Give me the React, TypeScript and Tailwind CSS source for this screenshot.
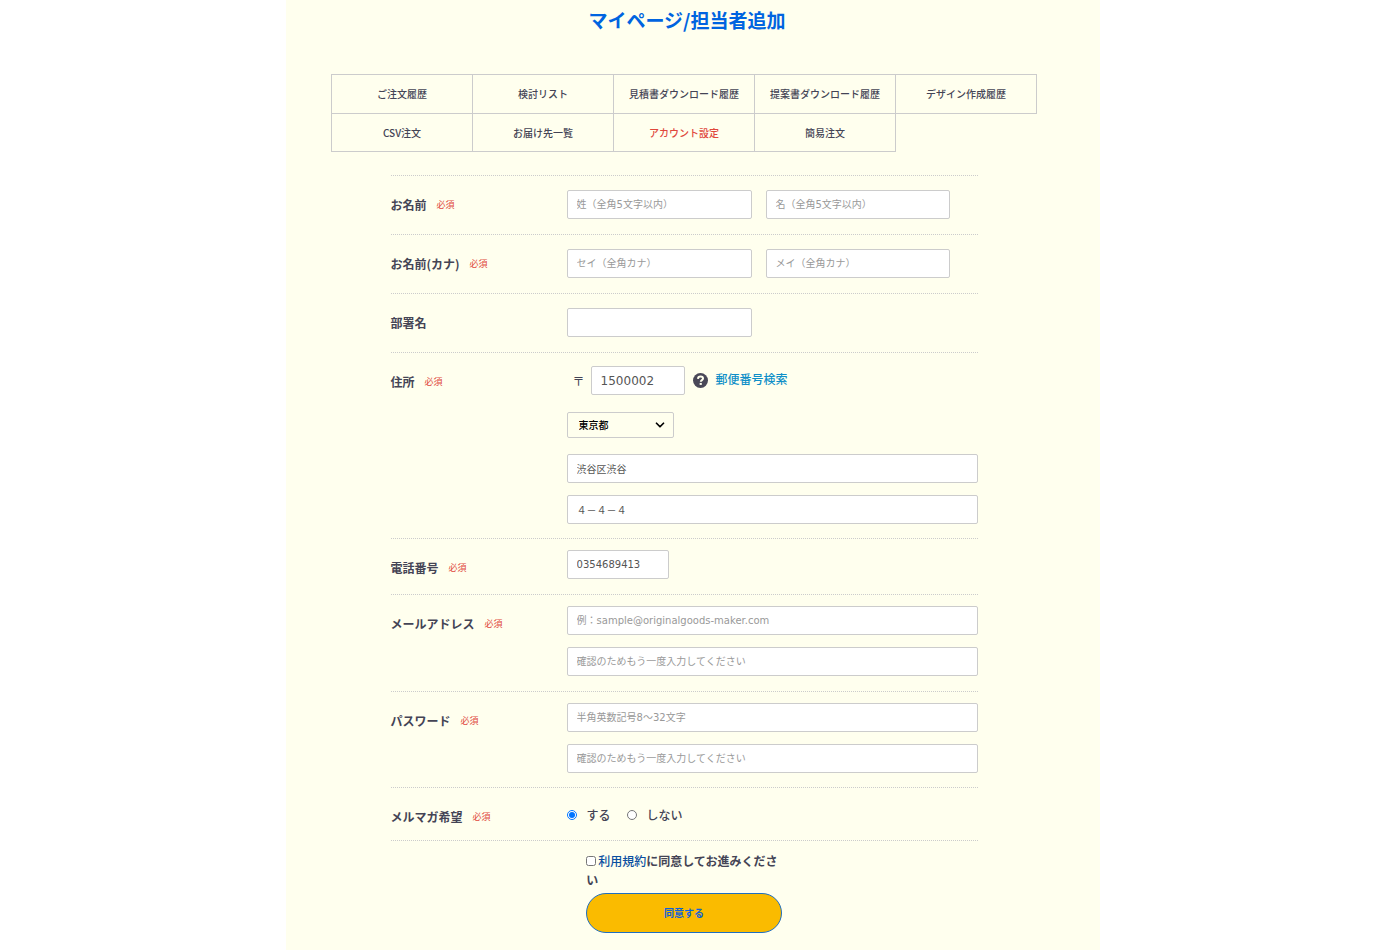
import React, { useState } from 'react';
import { ChevronDown } from 'lucide-react';
import { clsx } from 'clsx';

const navItems = [
  'ご注文履歴',
  '検討リスト',
  '見積書ダウンロード履歴',
  '提案書ダウンロード履歴',
  'デザイン作成履歴',
  'CSV注文',
  'お届け先一覧',
  'アカウント設定',
  '簡易注文',
];

const activeItem = 'アカウント設定';

type RowProps = {
  label: string;
  htmlFor?: string;
  required?: boolean;
  className: string;
  children: React.ReactNode;
};

// One line of the form: label on the left, fields on the right
const FormRow = ({ label, htmlFor, required = true, className, children }: RowProps) => (
  <div className="flex border-t border-dotted border-[#ccc]">
    <div className="flex h-[29px] w-[30%] shrink-0 items-center mt-3.5">
      <label htmlFor={htmlFor} className="text-[12px] font-bold">
        {label}
      </label>
      {required && <span className="ml-2.5 text-[9px] text-[#e0483c]">必須</span>}
    </div>
    <div className={clsx('min-w-0 flex-1', className)}>{children}</div>
  </div>
);

type FieldProps = React.InputHTMLAttributes<HTMLInputElement>;

const Field = ({ className, ...props }: FieldProps) => (
  <input
    className={clsx(
      'block h-[29px] rounded-xs border border-[#ccc] bg-white px-[9px] font-["DejaVu_Sans","Noto_Sans_CJK_JP",sans-serif] text-[#555] placeholder:text-[#999] focus:outline-none focus:border-[#0067dd]',
      className
    )}
    {...props}
  />
);

const HelpIcon = () => (
  <svg viewBox="0 0 16 16" className="h-[15px] w-[15px]" aria-hidden="true">
    <circle cx="8" cy="8" r="8" fill="#4a4858" />
    <path
      d="M5.3 6.3C5.4 4.6 6.5 3.8 8.1 3.8c1.6 0 2.6.8 2.6 2.1 0 1.7-2.4 1.7-2.4 3.5"
      fill="none"
      stroke="#ffffee"
      strokeWidth="2.1"
    />
    <rect x="7.1" y="10.6" width="2.3" height="2.1" fill="#ffffee" />
  </svg>
);

const App = () => {
  const [newsletter, setNewsletter] = useState('yes');
  const [agreed, setAgreed] = useState(false);

  return (
    <div className='min-h-screen bg-white pr-3.5 font-["Noto_Sans_CJK_JP",sans-serif] text-[#444455]'>
      <main className="mx-auto min-h-screen max-w-[814px] bg-[#ffffee] pl-[45px] pr-[63px] pb-4">
        <h1 className="pt-[5px] pl-1.5 text-center text-[19px] leading-[30px] font-bold text-[#0064e0]">
          マイページ/担当者追加
        </h1>

        <nav className="mt-[39px] grid grid-cols-5 border-l border-[#ccc]">
          {navItems.map((item, i) => (
            <a
              key={item}
              href="#"
              className={clsx(
                'flex items-center justify-center whitespace-nowrap border-r border-b border-[#ccc] pb-px text-[10px] font-medium',
                i < 5 ? 'h-10 border-t' : 'h-[38px]',
                item === activeItem && 'text-[#e0483c]'
              )}
            >
              {item}
            </a>
          ))}
        </nav>

        <form className="mx-auto mt-[23px] max-w-[587px]" onSubmit={e => e.preventDefault()}>
          <FormRow label="お名前" htmlFor="sei" className="flex gap-3.5 pt-3.5 pb-[15px]">
            <Field id="sei" className="w-[45%] text-[10px]" placeholder="姓（全角5文字以内）" />
            <Field aria-label="名" className="w-[45%] text-[10px]" placeholder="名（全角5文字以内）" />
          </FormRow>

          <FormRow label="お名前(カナ)" htmlFor="sei-kana" className="flex gap-3.5 pt-3.5 pb-[15px]">
            <Field id="sei-kana" className="w-[45%] text-[10px]" placeholder="セイ（全角カナ）" />
            <Field aria-label="メイ" className="w-[45%] text-[10px]" placeholder="メイ（全角カナ）" />
          </FormRow>

          <FormRow label="部署名" htmlFor="department" required={false} className="pt-3.5 pb-[15px]">
            <Field id="department" className="w-[45%] text-[10px]" />
          </FormRow>

          <FormRow label="住所" htmlFor="zip" className="pt-[13px] pb-3.5">
            <div className="flex items-center">
              <span className="ml-1.5 w-[18px] text-[12px]">〒</span>
              <Field id="zip" className="w-[94px] text-[12px]" defaultValue="1500002" />
              <span className="ml-2">
                <HelpIcon />
              </span>
              <a href="#" className="ml-2 pb-1 text-[12px] font-medium text-[#0f8fc8]">
                郵便番号検索
              </a>
            </div>
            <div className="relative mt-[17px] w-[107px]">
              <select
                aria-label="都道府県"
                className="block h-[26px] w-full appearance-none rounded-xs border border-[#ccc] bg-transparent pl-[11px] pb-0.5 text-[10px] font-medium text-black"
                defaultValue="東京都"
              >
                <option>東京都</option>
                <option>神奈川県</option>
                <option>大阪府</option>
              </select>
              <ChevronDown
                className="pointer-events-none absolute top-1.5 right-[7px] h-3.5 w-3.5 text-black"
                strokeWidth={3}
              />
            </div>
            <Field aria-label="市区町村" className="mt-4 w-full text-[10px]" defaultValue="渋谷区渋谷" />
            <Field aria-label="番地" className="mt-3 w-full text-[10px]" defaultValue="４－４－４" />
          </FormRow>

          <FormRow label="電話番号" htmlFor="tel" className="pt-[11px] pb-[15px]">
            <Field id="tel" type="tel" className="w-[102px] text-[10px]" defaultValue="0354689413" />
          </FormRow>

          <FormRow label="メールアドレス" htmlFor="email" className="space-y-3 pt-[11px] pb-[15px]">
            <Field
              id="email"
              type="email"
              className="w-full text-[10px]"
              placeholder="例：sample@originalgoods-maker.com"
            />
            <Field
              aria-label="メールアドレス（確認）"
              type="email"
              className="w-full text-[10px]"
              placeholder="確認のためもう一度入力してください"
            />
          </FormRow>

          <FormRow label="パスワード" htmlFor="password" className="space-y-3 pt-[11px] pb-3.5">
            <Field
              id="password"
              type="password"
              className="w-full text-[10px]"
              placeholder="半角英数記号8～32文字"
            />
            <Field
              aria-label="パスワード（確認）"
              type="password"
              className="w-full text-[10px]"
              placeholder="確認のためもう一度入力してください"
            />
          </FormRow>

          <FormRow label="メルマガ希望" htmlFor="newsletter-yes" className="flex gap-4 pt-3 pb-[11px]">
            <label className="flex h-[29px] items-center gap-2.5 text-[12px] font-medium">
              <input
                id="newsletter-yes"
                type="radio"
                name="newsletter"
                className="h-2.5 w-2.5"
                checked={newsletter === 'yes'}
                onChange={() => setNewsletter('yes')}
              />
              する
            </label>
            <label className="flex h-[29px] items-center gap-2.5 text-[12px] font-medium">
              <input
                type="radio"
                name="newsletter"
                className="h-2.5 w-2.5"
                checked={newsletter === 'no'}
                onChange={() => setNewsletter('no')}
              />
              しない
            </label>
          </FormRow>

          <div className="border-t border-dotted border-[#ccc] pt-2.5">
            <div className="mx-auto w-1/3">
              <p className="text-[12px] leading-[19px] font-bold">
                <input
                  id="agree"
                  type="checkbox"
                  className="mr-0.5 h-2.5 w-2.5"
                  checked={agreed}
                  onChange={e => setAgreed(e.target.checked)}
                />
                <a href="#" className="font-medium text-[#0b4fa0]">
                  利用規約
                </a>
                <label htmlFor="agree">に同意してお進みください</label>
              </p>
              <button
                type="submit"
                className="mt-1 h-10 w-full rounded-full border border-[#1f6fc0] bg-[#fabb00] pb-px text-[10px] font-bold text-[#0f62d8]"
              >
                同意する
              </button>
            </div>
          </div>
        </form>
      </main>
    </div>
  );
};

export default App;
